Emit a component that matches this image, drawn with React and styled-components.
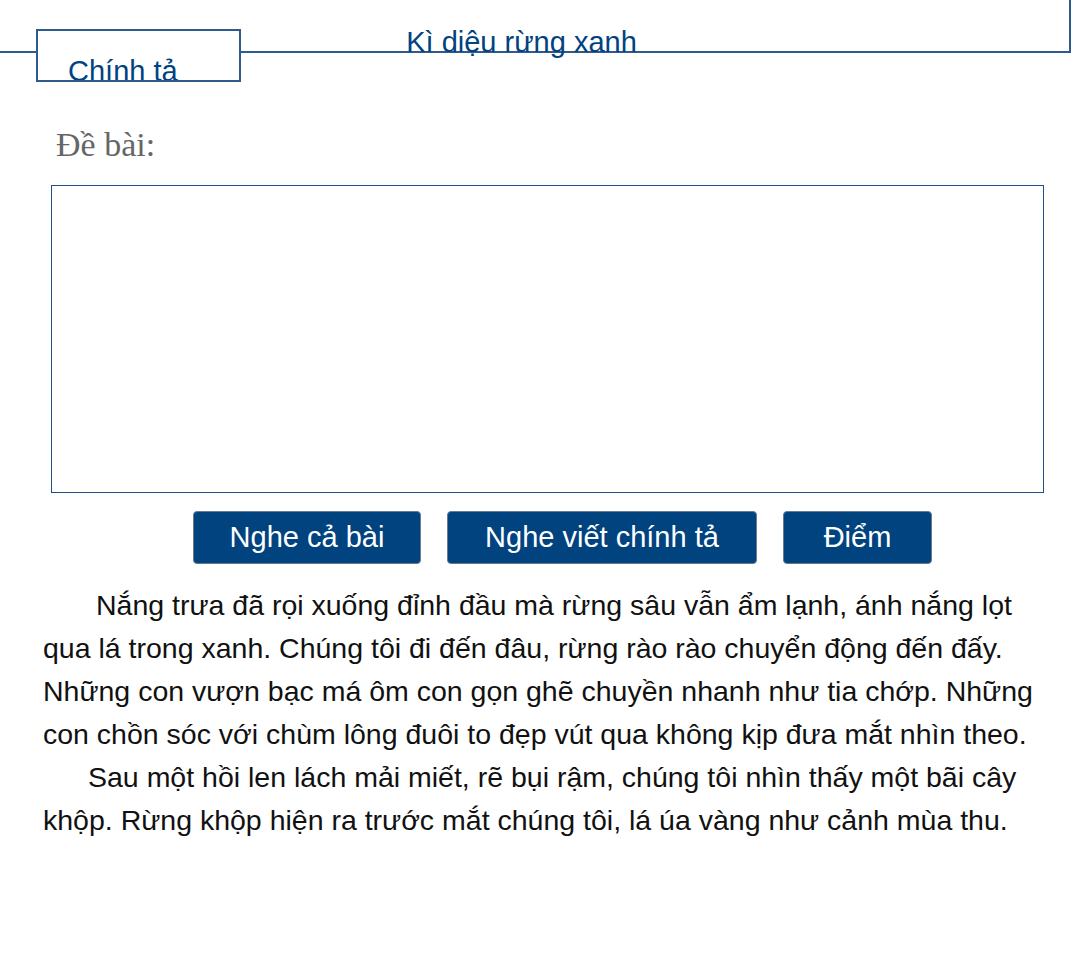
import React from 'react';
import styled, { createGlobalStyle } from 'styled-components';

const Global = createGlobalStyle`
  body { margin: 0; background: #fff; font-family: "Liberation Sans", Arial, sans-serif; }
`;

const Page = styled.div`
  width: 1073px;
  min-height: 965px;
`;

const Header = styled.div`
  position: relative;
  width: 1071px;
  height: 53px;
  border-bottom: 2px solid #2f5a8c;
  border-right: 2px solid #2f5a8c;
  box-sizing: border-box;
  display: flex;
  justify-content: center;
`;

const Title = styled.div`
  color: #00437f;
  font-size: 29px;
  padding-top: 24px;
  line-height: 36px;
  height: 29px;
  transform: translateX(-13px);
`;

const Tab = styled.div`
  position: absolute;
  left: 36px;
  top: 29px;
  width: 205px;
  height: 53px;
  box-sizing: border-box;
  border: 2px solid #2f5a8c;
  background: #fff;
  color: #00437f;
  font-size: 29px;
  padding-left: 30px;
  padding-top: 22px;
  line-height: 36px;
  overflow: hidden;
`;

const Label = styled.div`
  margin: 72px 0 0 56px;
  font-family: "Liberation Serif", "Times New Roman", serif;
  font-size: 34px;
  color: #666;
  line-height: 40px;
`;

const Box = styled.div`
  margin: 20px 0 0 51px;
  width: 993px;
  height: 308px;
  box-sizing: border-box;
  border: 1px solid #1f4f86;
`;

const Buttons = styled.div`
  display: flex;
  margin: 18px 0 0 193px;
  gap: 26px;
`;

const Button = styled.button`
  width: ${p => p.w}px;
  height: 53px;
  background: #00437f;
  color: #fff;
  border: 1px solid #6b7b8c;
  border-radius: 4px;
  font-family: "Liberation Sans", Arial, sans-serif;
  font-size: 29px;
  padding: 0;
`;

const Text = styled.div`
  margin: 20px 0 0 43px;
  width: 1000px;
  font-size: 28.5px;
  line-height: 43px;
  color: #111;
`;

const Para = styled.p`
  margin: 0;
  text-indent: ${p => p.indent}px;
`;

export default function App() {
  return (
    <Page>
      <Global />
      <Header>
        <Title>Kì diệu rừng xanh</Title>
        <Tab>Chính tả</Tab>
      </Header>
      <Label>Đề bài:</Label>
      <Box />
      <Buttons>
        <Button w={228}>Nghe cả bài</Button>
        <Button w={310}>Nghe viết chính tả</Button>
        <Button w={149}>Điểm</Button>
      </Buttons>
      <Text>
        <Para indent={53}>Nắng trưa đã rọi xuống đỉnh đầu mà rừng sâu vẫn ẩm lạnh, ánh nắng lọt qua lá trong xanh. Chúng tôi đi đến đâu, rừng rào rào chuyển động đến đấy. Những con vượn bạc má ôm con gọn ghẽ chuyền nhanh như tia chớp. Những con chồn sóc với chùm lông đuôi to đẹp vút qua không kịp đưa mắt nhìn theo.</Para>
        <Para indent={45}>Sau một hồi len lách mải miết, rẽ bụi rậm, chúng tôi nhìn thấy một bãi cây khộp. Rừng khộp hiện ra trước mắt chúng tôi, lá úa vàng như cảnh mùa thu.</Para>
      </Text>
    </Page>
  );
}
